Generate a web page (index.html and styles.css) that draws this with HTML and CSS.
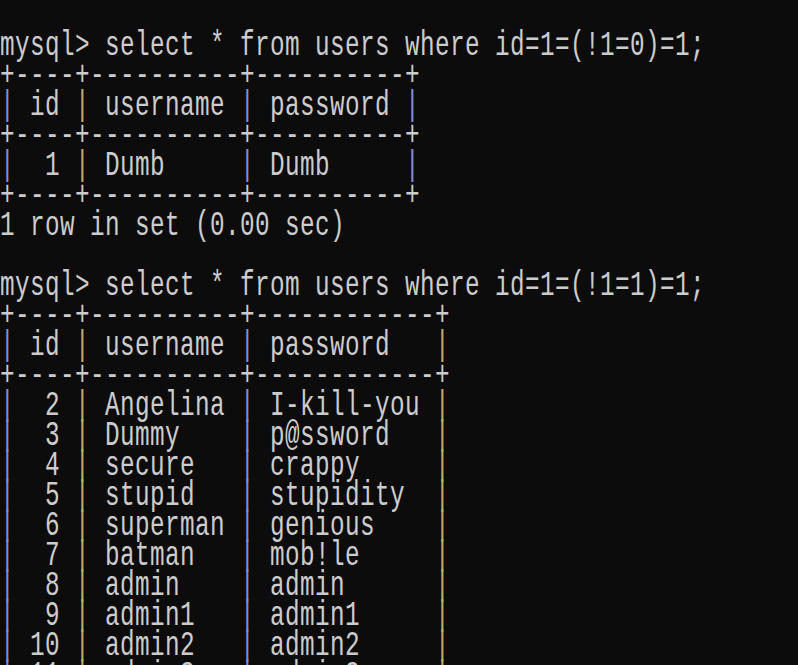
FILE: index.html
```html
<!DOCTYPE html>
<html>
<head>
<meta charset="utf-8">
<link rel="stylesheet" href="styles.css">
</head>
<body>
<div class="screen">
<pre class="term">mysql&gt; select * from users where id=1=(!1=0)=1;
+----+----------+----------+
<span class="pb">|</span> id <span class="py">|</span> username <span class="pb">|</span> password <span class="pb">|</span>
+----+----------+----------+
<span class="pb">|</span>  1 <span class="py">|</span> Dumb     <span class="pb">|</span> Dumb     <span class="pb">|</span>
+----+----------+----------+
1 row in set (0.00 sec)

mysql&gt; select * from users where id=1=(!1=1)=1;
+----+----------+------------+
<span class="pb">|</span> id <span class="py">|</span> username <span class="pb">|</span> password   <span class="py">|</span>
+----+----------+------------+
<span class="pb">|</span>  2 <span class="py">|</span> Angelina <span class="pb">|</span> I-kill-you <span class="py">|</span>
<span class="pb">|</span>  3 <span class="py">|</span> Dummy    <span class="pb">|</span> p@ssword   <span class="py">|</span>
<span class="pb">|</span>  4 <span class="py">|</span> secure   <span class="pb">|</span> crappy     <span class="py">|</span>
<span class="pb">|</span>  5 <span class="py">|</span> stupid   <span class="pb">|</span> stupidity  <span class="py">|</span>
<span class="pb">|</span>  6 <span class="py">|</span> superman <span class="pb">|</span> genious    <span class="py">|</span>
<span class="pb">|</span>  7 <span class="py">|</span> batman   <span class="pb">|</span> mob!le     <span class="py">|</span>
<span class="pb">|</span>  8 <span class="py">|</span> admin    <span class="pb">|</span> admin      <span class="py">|</span>
<span class="pb">|</span>  9 <span class="py">|</span> admin1   <span class="pb">|</span> admin1     <span class="py">|</span>
<span class="pb">|</span> 10 <span class="py">|</span> admin2   <span class="pb">|</span> admin2     <span class="py">|</span>
<span class="pb">|</span> 11 <span class="py">|</span> admin3   <span class="pb">|</span> admin3     <span class="py">|</span></pre>
</div>
</body>
</html>
```
FILE: styles.css
```css
html, body {
  margin: 0;
  padding: 0;
  background: #0c0c0c;
  overflow: hidden;
  height: 100%;
}
.screen {
  width: 1300px;
  padding-top: 31px;
  transform: scaleX(0.6944);
  transform-origin: 0 0;
}
.term {
  margin: 0;
  font-family: "Liberation Mono", monospace;
  font-size: 35px;
  line-height: 30px;
  letter-spacing: 0.6px;
  color: #cccccc;
  white-space: pre;
}
.pb {
  color: #8a8ad6;
}
.py {
  color: #c2ac6c;
}
```
